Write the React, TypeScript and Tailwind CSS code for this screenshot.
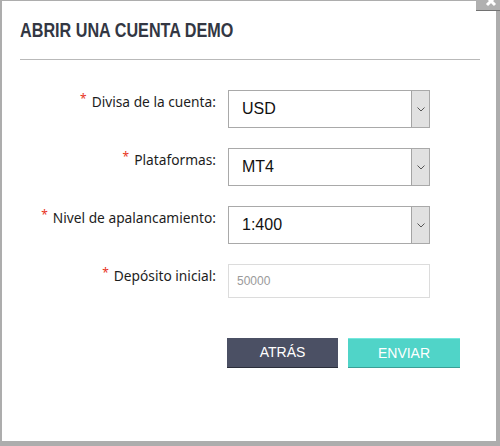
import React from "react";

const labelFont = { fontFamily: '"Noto Sans", "Open Sans", sans-serif' };

function Label({ text }: { text: string }) {
  return (
    <div
      className="w-[214px] shrink-0 text-right pt-[2px] text-[13.75px] leading-[20px] text-[#1d1d1d]"
      style={labelFont}
    >
      <span className="relative top-[1px] align-top text-[12px] leading-[12px] text-[#e8341c] mr-[5px]">*</span>
      {text}
    </div>
  );
}

function Select({ value }: { value: string }) {
  return (
    <div className="w-[202px] h-[38px] shrink-0 flex border border-[#a9a9a9] bg-white">
      <div className="flex-1 flex items-center pl-[13px] text-[16px] text-[#111] font-['Liberation_Sans',Arial,sans-serif]">
        {value}
      </div>
      <div className="w-[18px] flex items-center justify-center bg-[#e1e1e1] border-l border-[#a4a4a4]">
        <svg width="8" height="5" viewBox="0 0 8 5" fill="none">
          <path d="M0.5 0.5 L4 4 L7.5 0.5" stroke="#555" strokeWidth="1" />
        </svg>
      </div>
    </div>
  );
}

export default function App() {
  return (
    <div className="relative w-[500px] h-[446px] bg-[#adadad] pl-[2px] pt-[1px] pr-[4px] pb-[5px]">
      <div className="bg-white h-full">
        <div className="pl-[18px] pt-[17px]">
          <h1
            className="text-[19.5px] leading-[24px] font-bold text-[#333743] origin-left scale-x-[0.83] whitespace-nowrap"
            style={{ fontFamily: '"Liberation Sans", Arial, sans-serif' }}
          >
            ABRIR UNA CUENTA DEMO
          </h1>
        </div>
        <div className="ml-[18px] mr-[16px] mt-[17px] h-px bg-[#b9b9b9]" />
        <div className="mt-[30px] flex flex-col gap-[20px]">
          <div className="flex gap-[12px]">
            <Label text="Divisa de la cuenta:" />
            <Select value="USD" />
          </div>
          <div className="flex gap-[12px]">
            <Label text="Plataformas:" />
            <Select value="MT4" />
          </div>
          <div className="flex gap-[12px]">
            <Label text="Nivel de apalancamiento:" />
            <Select value="1:400" />
          </div>
          <div className="flex gap-[12px]">
            <Label text="Depósito inicial:" />
            <div className="w-[202px] h-[34px] shrink-0 flex items-center border border-[#dcdcdc] pl-[8px] text-[12px] text-[#9a9a9a] font-['Liberation_Sans',Arial,sans-serif]">
              50000
            </div>
          </div>
        </div>
        <div className="mt-[40px] pl-[225px] flex gap-[10px] text-[14px] font-normal text-white font-['Liberation_Sans',Arial,sans-serif]">
          <button className="w-[111px] h-[30px] bg-[#4b5064] border-b border-[#2a2e3a] flex items-center justify-center">
            ATRÁS
          </button>
          <button className="w-[112px] h-[30px] bg-[#50d4c8] border-t border-[#74e8dd] border-b border-b-[#3a9f96] flex items-center justify-center">
            ENVIAR
          </button>
        </div>
      </div>
      <div className="absolute top-0 right-0 w-[24px] h-[11px] bg-[#b0b0b0] border-b border-[#727272] overflow-hidden">
        <svg width="24" height="10" viewBox="0 0 24 10">
          <path d="M11 -3 L19 5 M19 -3 L11 5" stroke="#fff" strokeWidth="3" />
        </svg>
      </div>
    </div>
  );
}
